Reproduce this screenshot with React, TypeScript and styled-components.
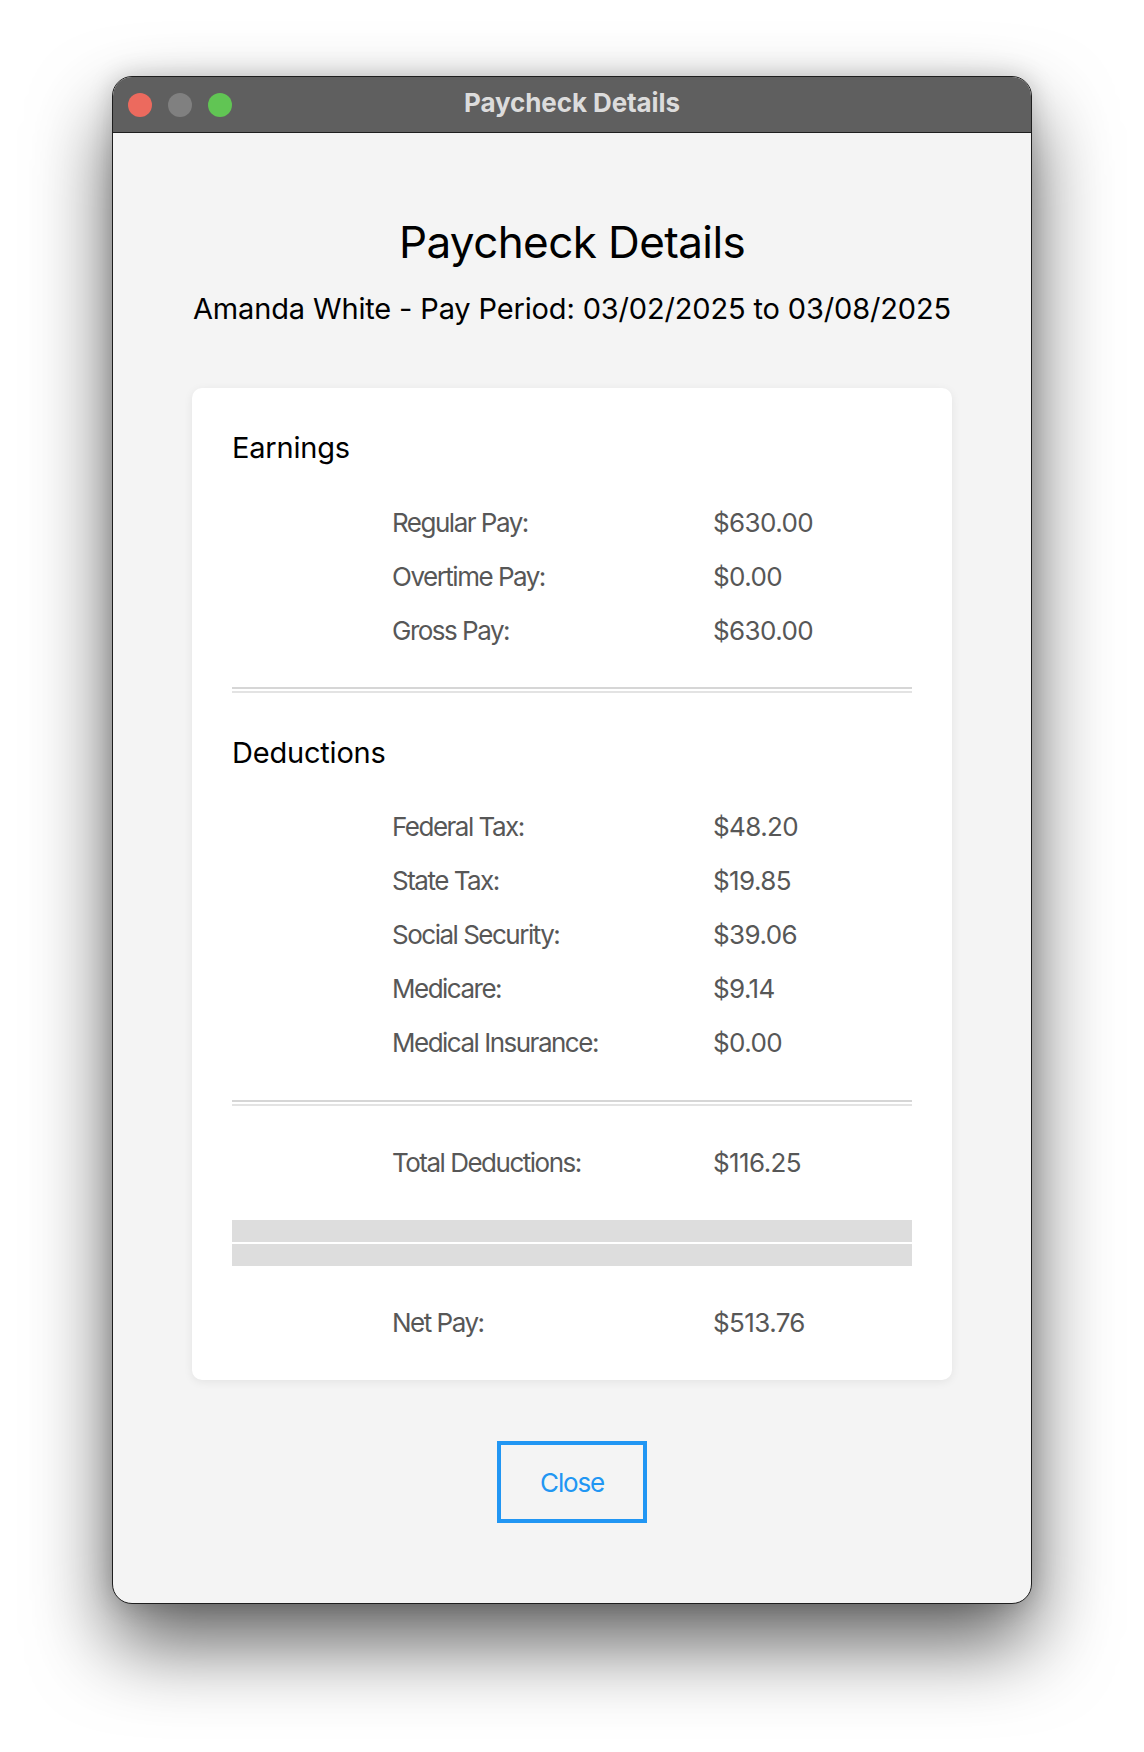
import React from "react";
import styled, { createGlobalStyle } from "styled-components";

const GlobalStyle = createGlobalStyle`
  html, body { margin: 0; padding: 0; background: #ffffff; }
  body { font-family: Inter, "Noto Sans", "Liberation Sans", sans-serif; }
  * { box-sizing: border-box; }
`;

const Page = styled.div`
  min-height: 1752px;
  padding-top: 76px;
  display: flex;
  justify-content: center;
  align-items: flex-start;
  background: #ffffff;
`;

const Window = styled.div`
  width: 920px;
  height: 1528px;
  border-radius: 20px;
  border: 1px solid #1e1e1e;
  overflow: hidden;
  background: #f4f4f4;
  display: flex;
  flex-direction: column;
  box-shadow: 0 40px 80px rgba(0, 0, 0, 0.62), 0 0 24px rgba(0, 0, 0, 0.18);
`;

const TitleBar = styled.div`
  height: 56px;
  flex: none;
  background: #5f5f5f;
  border-bottom: 1px solid #1e1e1e;
  display: grid;
  grid-template-columns: 1fr auto 1fr;
  align-items: center;
  padding: 0 15px;
`;

const Lights = styled.div`
  display: flex;
  gap: 16px;
  align-items: center;
`;

const Light = styled.span<{ $color: string }>`
  width: 24px;
  height: 24px;
  border-radius: 50%;
  background: ${(p) => p.$color};
`;

const WindowTitle = styled.div`
  font-family: Inter, "Liberation Sans", sans-serif;
  font-weight: 700;
  font-size: 26px;
  line-height: 30px;
  margin-top: -4px;
  color: #dcdcdc;
  letter-spacing: -0.1px;
`;

const Content = styled.div`
  flex: 1;
  display: flex;
  flex-direction: column;
  align-items: center;
  padding-top: 83px;
`;

const Heading = styled.h1`
  margin: 0;
  font-size: 44px;
  line-height: 53px;
  font-weight: 400;
  color: #000;
  letter-spacing: -0.6px;
`;

const SubHeading = styled.div`
  margin-top: 22px;
  font-size: 29px;
  line-height: 35px;
  color: #000;
  letter-spacing: -0.15px;
`;

const Card = styled.div`
  margin-top: 62px;
  width: 760px;
  background: #ffffff;
  border-radius: 10px;
  box-shadow: 0 2px 10px rgba(0, 0, 0, 0.07);
  padding: 42px 40px 42px;
  display: flex;
  flex-direction: column;
  gap: 41.5px;
`;

const SectionTitle = styled.div`
  font-size: 29px;
  line-height: 35px;
  color: #000;
  letter-spacing: -0.2px;
`;

const Rows = styled.div`
  display: grid;
  grid-template-columns: 321px 1fr;
  row-gap: 23px;
  padding-left: 160px;
  font-size: 26px;
  line-height: 31px;
  color: #575757;
`;

const Label = styled.div`
  letter-spacing: -1.5px;
`;

const Value = styled.div`
  letter-spacing: -0.6px;
`;

const Separator = styled.div`
  height: 6px;
  border-top: 2px solid #d6d6d6;
  border-bottom: 2px solid #e3e3e3;
`;

const ThickSeparator = styled.div`
  display: flex;
  flex-direction: column;
  gap: 2px;
`;

const Bar = styled.div`
  height: 22px;
  background: #dddddd;
`;

const CloseButton = styled.button`
  margin-top: 61px;
  width: 150px;
  height: 82px;
  border: 4px solid #2196f3;
  border-radius: 0;
  background: transparent;
  color: #2196f3;
  font-family: Inter, "Liberation Sans", sans-serif;
  font-size: 26px;
  letter-spacing: -1.2px;
  cursor: pointer;
`;

type Row = [string, string];

const earnings: Row[] = [
  ["Regular Pay:", "$630.00"],
  ["Overtime Pay:", "$0.00"],
  ["Gross Pay:", "$630.00"],
];

const deductions: Row[] = [
  ["Federal Tax:", "$48.20"],
  ["State Tax:", "$19.85"],
  ["Social Security:", "$39.06"],
  ["Medicare:", "$9.14"],
  ["Medical Insurance:", "$0.00"],
];

const RowGroup = ({ rows }: { rows: Row[] }) => (
  <Rows>
    {rows.map(([label, value]) => (
      <React.Fragment key={label}>
        <Label>{label}</Label>
        <Value>{value}</Value>
      </React.Fragment>
    ))}
  </Rows>
);

export default function App() {
  return (
    <>
      <GlobalStyle />
      <Page>
        <Window>
          <TitleBar>
            <Lights>
              <Light $color="#ec6a5e" />
              <Light $color="#808080" />
              <Light $color="#61c554" />
            </Lights>
            <WindowTitle>Paycheck Details</WindowTitle>
            <div />
          </TitleBar>
          <Content>
            <Heading>Paycheck Details</Heading>
            <SubHeading>Amanda White - Pay Period: 03/02/2025 to 03/08/2025</SubHeading>
            <Card>
              <SectionTitle>Earnings</SectionTitle>
              <RowGroup rows={earnings} />
              <Separator />
              <SectionTitle>Deductions</SectionTitle>
              <RowGroup rows={deductions} />
              <Separator />
              <RowGroup rows={[["Total Deductions:", "$116.25"]]} />
              <ThickSeparator>
                <Bar />
                <Bar />
              </ThickSeparator>
              <RowGroup rows={[["Net Pay:", "$513.76"]]} />
            </Card>
            <CloseButton>Close</CloseButton>
          </Content>
        </Window>
      </Page>
    </>
  );
}
